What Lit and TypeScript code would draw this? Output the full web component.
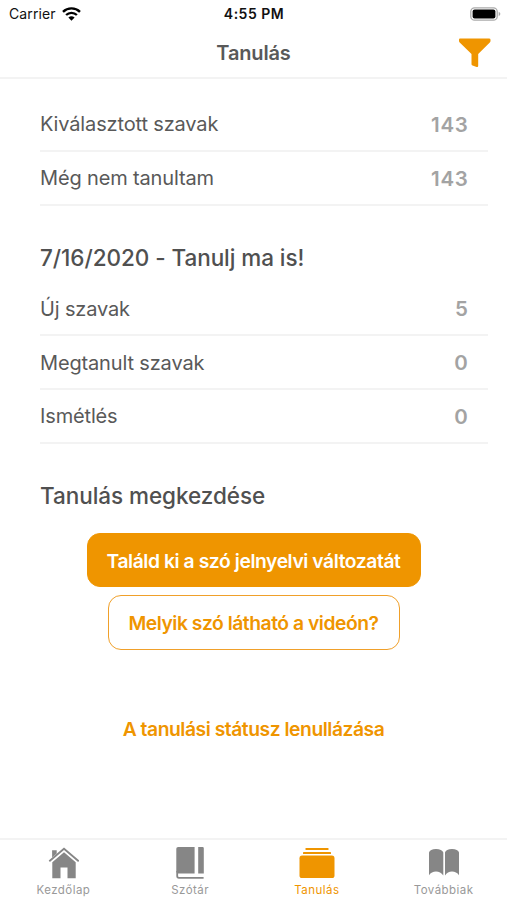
import { LitElement, html, css, svg } from "lit";
import { customElement, property } from "lit/decorators.js";

const icons = {
  home: svg`<svg width="32" height="32" viewBox="0 0 32 32" fill="currentColor">
    <path d="M2.300 14.300 17 1.800 31.700 14.300" fill="none" stroke="currentColor" stroke-width="1.800"/>
    <path d="M5.100 3.300h4.600v3.200L5.100 10.400z"/>
    <path d="M17 5.200 28.700 15.200v16h-8.200V20.600h-7V31.200H5.300V15.200z"/></svg>`,
  book: svg`<svg width="32" height="32" viewBox="0 0 32 32" fill="currentColor">
    <path d="M4.100 0H20.600V26.400H4.100a1.800 1.800 0 0 1-1.800-1.800V1.800A1.800 1.800 0 0 1 4.100 0zM24.200 0h4.400q1.200 0 1.200 1.200v25.200h-5.600z"/>
    <path d="M3.200 24v5a1.800 1.800 0 0 0 1.800 1.800h24.600" fill="none" stroke="currentColor" stroke-width="1.800"/></svg>`,
  stack: svg`<svg width="36" height="32" viewBox="0 0 36 32" fill="currentColor">
    <rect x="6.500" y="1" width="23" height="2" rx=".6"/><rect x="4" y="5" width="28" height="2" rx=".6"/>
    <rect x=".5" y="8.600" width="35" height="22.400" rx="2.600"/></svg>`,
  open: svg`<svg width="32" height="32" viewBox="0 0 32 32" fill="currentColor">
    <path d="M1 5.500Q2 2 8 2t7.300 3.500V28.600Q12.500 24.600 8 24.600T1 28.200zM17 5.500Q18 2 24 2t7 3.500V28.200Q28.500 24.600 24 24.600T17 28.600z"/></svg>`,
};

@customElement("stat-row")
class StatRow extends LitElement {
  @property() label = "";
  @property() value = "";
  static styles = css`
    :host { display: flex; justify-content: space-between; align-items: center; box-sizing: border-box;
      height: 53.75px; padding: 1px 19.5px 0 0; border-bottom: 2px solid #f3f3f3;
      font-size: 20px; letter-spacing: -0.15px; color: #595959; }
    .value { color: #a3a3a3; font-weight: 600; font-size: 20.5px; letter-spacing: 0.7px; }
  `;
  render() {
    return html`<span>${this.label}</span><span class="value">${this.value}</span>`;
  }
}

@customElement("app-root")
class AppRoot extends LitElement {
  static styles = css`
    :host { display: flex; flex-direction: column; box-sizing: border-box; width: 100%; height: 100vh;
      background: #fff; color: #505050; font-family: Inter, "Liberation Sans", sans-serif; overflow: hidden; }
    svg { display: block; }
    .status { height: 27px; flex: none; display: grid; grid-template-columns: 1fr auto 1fr; align-items: center;
      padding: 0 6px 0 9px; font-size: 14px; color: #111; }
    .carrier { display: flex; align-items: center; gap: 6px; letter-spacing: 0.1px; }
    .time { font-weight: 600; letter-spacing: 0.5px; margin-left: -2px; }
    .battery { justify-self: end; }
    .header { height: 52px; flex: none; box-sizing: border-box; display: grid; grid-template-columns: 1fr auto 1fr;
      align-items: center; padding: 2px 16px 0; border-bottom: 2px solid #f3f3f3; }
    .title { grid-column: 2; font-size: 20px; font-weight: 600; letter-spacing: -0.15px; color: #595959; }
    .filter { justify-self: end; }
    .content { flex: 1; padding: 19px 19px 0 40px; display: flex; flex-direction: column; }
    h2 { margin: 0; font-size: 22.5px; font-weight: 500; line-height: 28px; letter-spacing: -0.06px; }
    .today { margin: 38px 0 11px; }
    .start { margin: 38px 0 23px; }
    .actions { display: flex; flex-direction: column; align-items: center; gap: 8px; margin-left: -21px; }
    .btn { box-sizing: border-box; height: 54.5px; border-radius: 13px; border: 1px solid #ef9500; display: flex;
      align-items: center; justify-content: center; padding-top: 1px; font-size: 19.3px; font-weight: 600; color: #ef9500; white-space: nowrap; }
    .primary { width: 334px; background: #ef9500; color: #fff; letter-spacing: -0.42px; }
    .outline { width: 292px; border-color: #f0a02a; letter-spacing: -0.47px; }
    .reset { margin-top: 59px; font-size: 19.3px; line-height: 24px; font-weight: 600; color: #ef9500; letter-spacing: -0.46px; }
    .tabs { flex: none; height: 62px; box-sizing: border-box; border-top: 2px solid #f3f3f3;
      display: grid; grid-template-columns: repeat(4, 1fr); }
    .tab { display: flex; flex-direction: column; align-items: center; padding-top: 7px; color: #868686; }
    .tab.active { color: #ef9500; }
    .name { margin-top: 3px; font-size: 11.5px; line-height: 16px; letter-spacing: 0.45px; color: #999; }
    .active .name { color: #ef9500; }
  `;
  tabs = [
    { name: "Kezdőlap", icon: icons.home },
    { name: "Szótár", icon: icons.book },
    { name: "Tanulás", icon: icons.stack, active: true },
    { name: "Továbbiak", icon: icons.open },
  ];
  render() {
    return html`
      <div class="status">
        <div class="carrier"><span>Carrier</span>
          <svg width="19" height="14" viewBox="0 0 19 14" fill="none" stroke="#000" stroke-width="2.4">
            <path d="M1 4.800a12.300 12.300 0 0 1 17 0M4.100 8a7.800 7.800 0 0 1 10.800 0"/>
            <path d="M9.500 13.700 6.400 10.600a4.500 4.500 0 0 1 6.200 0z" fill="#000" stroke="none"/></svg></div>
        <div class="time">4:55 PM</div>
        <svg class="battery" width="31" height="14" viewBox="0 0 31 14">
          <rect x=".8" y=".8" width="26.400" height="12.400" rx="3.800" fill="#fff" stroke="#aaa" stroke-width="1.300"/>
          <rect x="2.600" y="2.600" width="22.800" height="8.800" rx="2" fill="#000"/>
          <path d="M28.700 4.800q3.400 2.200 0 4.400z" fill="#aaa"/></svg>
      </div>
      <div class="header">
        <div class="title">Tanulás</div>
        <svg class="filter" width="33" height="30" viewBox="0 0 33 30">
          <path d="M2 .5h29q1.500 0 1.500 1.200v1.300q0 .9-.7 1.500L20.200 16V27.800q0 1.600-1.500 1.200l-4.200-1.400q-1-.4-1-1.300V16L1.700 4.500Q1 3.900 1 3V1.700Q1 .5 2 .5z" fill="#ef9500"/></svg>
      </div>
      <div class="content">
        <stat-row label="Kiválasztott szavak" value="143"></stat-row>
        <stat-row label="Még nem tanultam" value="143"></stat-row>
        <h2 class="today">7/16/2020 - Tanulj ma is!</h2>
        <stat-row label="Új szavak" value="5"></stat-row>
        <stat-row label="Megtanult szavak" value="0"></stat-row>
        <stat-row label="Ismétlés" value="0"></stat-row>
        <h2 class="start">Tanulás megkezdése</h2>
        <div class="actions">
          <div class="btn primary">Találd ki a szó jelnyelvi változatát</div>
          <div class="btn outline">Melyik szó látható a videón?</div>
          <div class="reset">A tanulási státusz lenullázása</div>
        </div>
      </div>
      <div class="tabs">
        ${this.tabs.map((t) => html`<div class="tab ${t.active ? "active" : ""}">${t.icon}<span class="name">${t.name}</span></div>`)}
      </div>`;
  }
}
